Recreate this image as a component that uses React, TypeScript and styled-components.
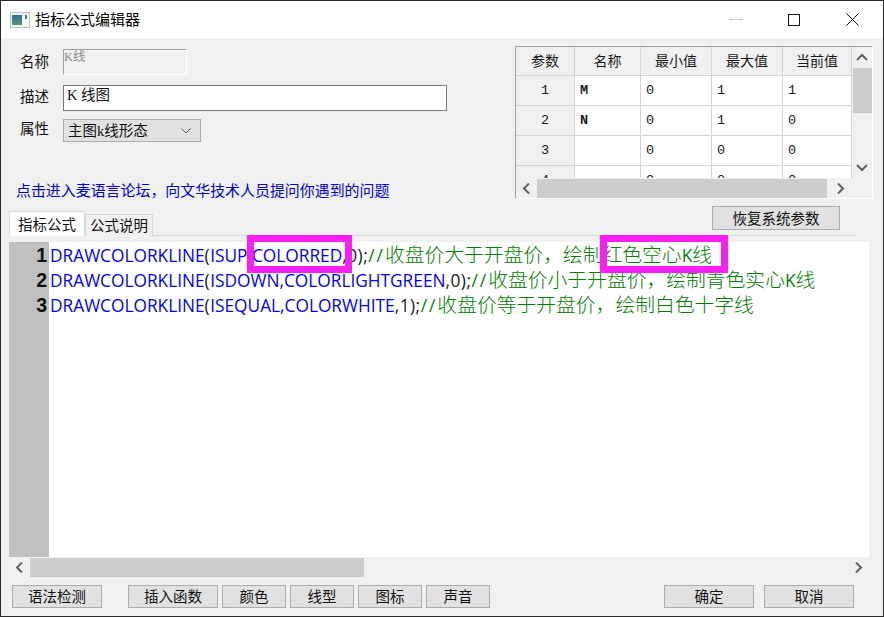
import React from "react";
import styled, { createGlobalStyle } from "styled-components";

const CJK = `"Noto Sans CJK SC", "Liberation Sans", sans-serif`;
const SERIF_CJK = `"Liberation Serif", "Noto Sans CJK SC", serif`;
const MONO_CJK = `"Liberation Mono", "Noto Sans CJK SC", monospace`;

const Global = createGlobalStyle`
  html, body { margin: 0; padding: 0; background: #f0f0f0; }
  * { box-sizing: border-box; }
`;

const Win = styled.div`
  width: 884px; height: 617px; border: 1px solid #2a2a2a;
  background: #f0f0f0; display: flex; flex-direction: column; overflow: hidden;
  font-family: ${CJK}; color: #111;
`;
const TitleBar = styled.div`
  height: 37px; flex: none; background: #fff; display: flex; align-items: center;
  padding: 0 2px 0 9px;
`;
const TitleText = styled.span`
  font-size: 15px; margin-left: 5px; flex: 1; color: #000; padding-bottom: 2px;
`;
const WinBtn = styled.div`
  width: 58px; height: 37px; display: flex; align-items: center; justify-content: center; flex: none;
`;
const Top = styled.div`
  height: 171px; flex: none; display: flex; justify-content: space-between;
  padding: 8px 10px 0 14px;
`;
const FormCol = styled.div`
  width: 434px; padding-top: 3px; display: flex; flex-direction: column;
`;
const FormRow = styled.div<{ $h: number; $mb: number }>`
  height: ${p => p.$h}px; margin-bottom: ${p => p.$mb}px; display: flex; align-items: flex-start; padding-left: 5px;
`;
const Label = styled.label<{ $dy?: number }>`
  width: 43px; flex: none; font-size: 14.5px; line-height: 20px; margin-top: ${p => p.$dy ?? 0}px; color: #111;
`;
const NameField = styled.div`
  width: 124px; height: 26px; border: 1px solid #a0a0a0; border-right-color: #fff; border-bottom-color: #fff;
  font-family: ${SERIF_CJK}; font-size: 12.5px; color: #8a8a8a; line-height: 15px;
`;
const DescField = styled.div`
  width: 384px; height: 26px; border: 1px solid #7a7a7a; background: #fff;
  font-family: ${SERIF_CJK}; font-size: 14.5px; line-height: 19px; padding-left: 3px; color: #111;
`;
const Select = styled.div`
  width: 138px; height: 23px; border: 1px solid #adadad; background: #e1e1e1; display: flex; align-items: center;
  justify-content: space-between; padding: 0 9px 0 4px; font-family: ${SERIF_CJK}; font-size: 14.5px; line-height: 20px; color: #111;
`;
const Link = styled.a`
  display: block; margin: 38px 0 0 1px; font-size: 14.95px; line-height: 20px; color: #0000d0; white-space: nowrap;
`;
const TablePanel = styled.div`
  width: 358px; height: 153px; border: 1px solid #a0a0a0; border-right-color: #fff; border-bottom-color: #fff;
  display: flex; flex-direction: column;
`;
const TableTop = styled.div`
  height: 131px; flex: none; display: flex;
`;
const Grid = styled.div`
  width: 336px; height: 131px; overflow: hidden; flex: none; background: #fff;
`;
const Row = styled.div<{ $head?: boolean }>`
  display: grid; grid-template-columns: 59px 66px 71px 71px 69px;
  height: ${p => (p.$head ? 29 : 30)}px;
  background: ${p => (p.$head ? "#f0f0f0" : "#fff")};
  font-family: ${p => (p.$head ? CJK : MONO_CJK)};
  font-size: ${p => (p.$head ? 14 : 13.5)}px;
`;
const Cell = styled.div<{ $head?: boolean; $row?: boolean; $bold?: boolean }>`
  border-right: 1px solid #d4d4d4; border-bottom: 1px solid #d4d4d4;
  display: flex; align-items: center; overflow: hidden; color: #1a1a1a;
  justify-content: ${p => (p.$head || p.$row ? "center" : "flex-start")};
  padding-left: ${p => (p.$head || p.$row ? 0 : 5)}px;
  padding-bottom: ${p => (p.$head ? 2 : 0)}px;
  background: ${p => (p.$head || p.$row ? "#f0f0f0" : "#fff")};
  font-weight: ${p => (p.$bold ? 700 : 400)};
`;
const VBar = styled.div`
  width: 20px; flex: none; background: #f0f0f0; display: flex; flex-direction: column; align-items: center;
`;
const VBtn = styled.div`
  height: 21px; width: 100%; flex: none; display: flex; align-items: center; justify-content: center;
`;
const VThumb = styled.div`
  width: 19px; height: 45px; background: #cdcdcd; flex: none;
`;
const HBar = styled.div`
  height: 20px; flex: none; display: flex; align-items: center; background: #f0f0f0;
`;
const HBtn = styled.div<{ $w: number }>`
  width: ${p => p.$w}px; height: 100%; flex: none; display: flex; align-items: center; justify-content: center;
`;
const HThumb = styled.div<{ $w: number }>`
  width: ${p => p.$w}px; height: 19px; background: #cdcdcd; flex: none;
`;
const Spacer = styled.div` flex: 1; `;
const TabStrip = styled.div`
  height: 27px; flex: none; margin: 0 26px 0 8px; border-bottom: 1px solid #d9d9d9; display: flex; align-items: flex-end; position: relative;
`;
const Tab = styled.div<{ $active?: boolean }>`
  font-size: 14.5px; display: flex; align-items: center; justify-content: center; color: #111; padding-bottom: 2px;
  width: ${p => (p.$active ? 76 : 68)}px;
  height: ${p => (p.$active ? 25 : 22)}px;
  margin-bottom: -1px;
  background: ${p => (p.$active ? "#fff" : "#f0f0f0")};
  border: 1px solid #d9d9d9; border-bottom: none;
`;
const RestoreBtn = styled.div`
  position: absolute; right: 17px; top: -3px; width: 128px; height: 24px; border: 1px solid #adadad; background: #e1e1e1;
  display: flex; align-items: center; justify-content: center; font-size: 14.5px; color: #111; padding-bottom: 2px;
`;
const EditorWrap = styled.div`
  margin: 6px 14px 0 8px; flex: none; position: relative;
`;
const Editor = styled.div`
  height: 315px; background: #fff; display: flex;
`;
const Gutter = styled.div`
  width: 40px; flex: none; background: #c0c0c0; padding-top: 1px;
`;
const LineNo = styled.div`
  height: 25px; line-height: 25px; text-align: right; padding-right: 2px; font-family: "Liberation Sans", sans-serif; font-weight: 700; font-size: 19.5px; color: #111;
`;
const Code = styled.div`
  flex: 1; padding: 0 0 0 1px; overflow: hidden;
`;
const Line = styled.div`
  height: 25px; line-height: 23px; white-space: nowrap; font-family: "Open Sans", ${CJK}; font-size: 17.3px;
`;
const Kw = styled.span` color: #0000ff; `;
const Op = styled.span` color: #1a1a1a; letter-spacing: 0.5px; `;
const Cm = styled.span` color: #008000; `;
const Slashes = styled.span` letter-spacing: 2px; `;
const CmCjk = styled.span` font-family: ${CJK}; font-size: 19.8px; font-weight: 300; `;
const Highlight = styled.div<{ $l: number; $w: number }>`
  position: absolute; left: ${p => p.$l}px; top: -7px; width: ${p => p.$w}px; height: 38px; border: 7px solid #f81ff0; pointer-events: none;
`;
const EdHBar = styled.div`
  height: 20px; display: flex; align-items: center;
`;
const Buttons = styled.div`
  display: flex; align-items: center; margin: 8px 0 0 11px; height: 23px; flex: none;
`;
const Btn = styled.div<{ $w: number; $ml?: number }>`
  width: ${p => p.$w}px; height: 23px; margin-left: ${p => p.$ml ?? 4}px; flex: none;
  border: 1px solid #adadad; background: #e1e1e1; font-size: 14.5px; color: #111; padding-bottom: 2px;
  display: flex; align-items: center; justify-content: center;
`;

const Arrow = ({ d }: { d: "up" | "down" | "left" | "right" }) => {
  const paths = { up: "M1 7 L6 2 L11 7", down: "M1 2 L6 7 L11 2", left: "M7 0.5 L2 5.5 L7 10.5", right: "M2 0.5 L7 5.5 L2 10.5" };
  const horiz = d === "left" || d === "right";
  return (
    <svg width={horiz ? 9 : 12} height={horiz ? 11 : 9} viewBox={horiz ? "0 0 9 11" : "0 0 12 9"}>
      <path d={paths[d]} fill="none" stroke="#606060" strokeWidth="2" />
    </svg>
  );
};

const rows = [
  ["1", "M", "0", "1", "1"],
  ["2", "N", "0", "1", "0"],
  ["3", "", "0", "0", "0"],
  ["4", "", "0", "0", "0"],
];

export default function App() {
  return (
    <Win>
      <Global />
      <TitleBar>
        <svg width="20" height="16" viewBox="0 0 20 16">
          <rect x="0.5" y="0.5" width="19" height="15" fill="#f4f4f4" stroke="#c4c4c4" />
          <defs>
            <linearGradient id="g" x1="0" y1="0" x2="0" y2="1">
              <stop offset="0" stopColor="#2f6f9a" />
              <stop offset="1" stopColor="#4f9a70" />
            </linearGradient>
          </defs>
          <rect x="2" y="3" width="10" height="10" fill="url(#g)" />
          <rect x="15" y="3" width="2" height="4" fill="#3a7aa0" />
        </svg>
        <TitleText>指标公式编辑器</TitleText>
        <WinBtn>
          <svg width="14" height="2"><rect width="14" height="1" fill="#c4c4c4" /></svg>
        </WinBtn>
        <WinBtn>
          <svg width="12" height="12"><rect x="0.5" y="0.5" width="11" height="11" fill="none" stroke="#111" /></svg>
        </WinBtn>
        <WinBtn>
          <svg width="13" height="13"><path d="M0.5 0.5 L12.5 12.5 M12.5 0.5 L0.5 12.5" stroke="#111" fill="none" /></svg>
        </WinBtn>
      </TitleBar>
      <Top>
        <FormCol>
          <FormRow $h={26} $mb={10}>
            <Label $dy={2}>名称</Label>
            <NameField>K线</NameField>
          </FormRow>
          <FormRow $h={26} $mb={8}>
            <Label $dy={1}>描述</Label>
            <DescField>K 线图</DescField>
          </FormRow>
          <FormRow $h={23} $mb={0}>
            <Label $dy={-1}>属性</Label>
            <Select>
              主图k线形态
              <svg width="10" height="6" viewBox="0 0 10 6"><path d="M0.5 0.5 L5 5 L9.5 0.5" fill="none" stroke="#555" /></svg>
            </Select>
          </FormRow>
          <Link>点击进入麦语言论坛，向文华技术人员提问你遇到的问题</Link>
        </FormCol>
        <TablePanel>
          <TableTop>
            <Grid>
              <Row $head>
                {["参数", "名称", "最小值", "最大值", "当前值"].map(h => (
                  <Cell key={h} $head>{h}</Cell>
                ))}
              </Row>
              {rows.map(r => (
                <Row key={r[0]}>
                  {r.map((c, i) => (
                    <Cell key={i} $row={i === 0} $bold={i === 1}>{c}</Cell>
                  ))}
                </Row>
              ))}
            </Grid>
            <VBar>
              <VBtn><Arrow d="up" /></VBtn>
              <VThumb />
              <Spacer />
              <VBtn><Arrow d="down" /></VBtn>
            </VBar>
          </TableTop>
          <HBar>
            <HBtn $w={21}><Arrow d="left" /></HBtn>
            <HThumb $w={290} />
            <HBtn $w={26}><Arrow d="right" /></HBtn>
          </HBar>
        </TablePanel>
      </Top>
      <TabStrip>
        <Tab $active>指标公式</Tab>
        <Tab>公式说明</Tab>
        <RestoreBtn>恢复系统参数</RestoreBtn>
      </TabStrip>
      <EditorWrap>
        <Editor>
          <Gutter>
            <LineNo>1</LineNo>
            <LineNo>2</LineNo>
            <LineNo>3</LineNo>
          </Gutter>
          <Code>
            <Line>
              <Kw>DRAWCOLORKLINE</Kw><Op>(</Op><Kw>ISUP,COLORRED</Kw><Op>,0);</Op><Cm><Slashes>//</Slashes><CmCjk>收盘价大于开盘价，绘制红色空心</CmCjk>K<CmCjk>线</CmCjk></Cm>
            </Line>
            <Line>
              <Kw>DRAWCOLORKLINE</Kw><Op>(</Op><Kw>ISDOWN,COLORLIGHTGREEN</Kw><Op>,0);</Op><Cm><Slashes>//</Slashes><CmCjk>收盘价小于开盘价，绘制青色实心</CmCjk>K<CmCjk>线</CmCjk></Cm>
            </Line>
            <Line>
              <Kw>DRAWCOLORKLINE</Kw><Op>(</Op><Kw>ISEQUAL,COLORWHITE</Kw><Op>,1);</Op><Cm><Slashes>//</Slashes><CmCjk>收盘价等于开盘价，绘制白色十字线</CmCjk></Cm>
            </Line>
          </Code>
        </Editor>
        <Highlight $l={238} $w={105} />
        <Highlight $l={591} $w={128} />
        <EdHBar>
          <HBtn $w={21}><Arrow d="left" /></HBtn>
          <HThumb $w={334} />
          <Spacer />
          <HBtn $w={22}><Arrow d="right" /></HBtn>
        </EdHBar>
      </EditorWrap>
      <Buttons>
        <Btn $w={90} $ml={0}>语法检测</Btn>
        <Btn $w={90} $ml={26}>插入函数</Btn>
        <Btn $w={64}>颜色</Btn>
        <Btn $w={64}>线型</Btn>
        <Btn $w={64}>图标</Btn>
        <Btn $w={64}>声音</Btn>
        <Btn $w={90} $ml={174}>确定</Btn>
        <Btn $w={90} $ml={10}>取消</Btn>
      </Buttons>
    </Win>
  );
}
